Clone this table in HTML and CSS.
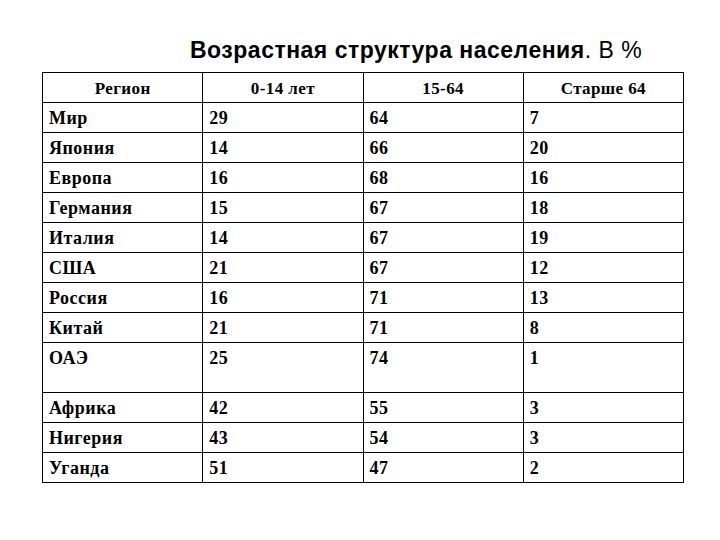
FILE: index.html
```html
<!DOCTYPE html>
<html lang="ru">
<head>
<meta charset="utf-8">
<link rel="stylesheet" href="styles.css">
</head>
<body>
<div class="page">
  <h1 class="title"><span class="title-main">Возрастная структура населения</span>. В %</h1>
  <table class="data">
    <colgroup><col class="c"><col class="c"><col class="c"><col class="c"></colgroup>
    <thead>
      <tr class="head"><th>Регион</th><th>0-14 лет</th><th>15-64</th><th>Старше 64</th></tr>
    </thead>
    <tbody>
      <tr><td>Мир</td><td>29</td><td>64</td><td>7</td></tr>
      <tr><td>Япония</td><td>14</td><td>66</td><td>20</td></tr>
      <tr><td>Европа</td><td>16</td><td>68</td><td>16</td></tr>
      <tr><td>Германия</td><td>15</td><td>67</td><td>18</td></tr>
      <tr><td>Италия</td><td>14</td><td>67</td><td>19</td></tr>
      <tr><td>США</td><td>21</td><td>67</td><td>12</td></tr>
      <tr><td>Россия</td><td>16</td><td>71</td><td>13</td></tr>
      <tr><td>Китай</td><td>21</td><td>71</td><td>8</td></tr>
      <tr class="tall"><td>ОАЭ</td><td>25</td><td>74</td><td>1</td></tr>
      <tr><td>Африка</td><td>42</td><td>55</td><td>3</td></tr>
      <tr><td>Нигерия</td><td>43</td><td>54</td><td>3</td></tr>
      <tr><td>Уганда</td><td>51</td><td>47</td><td>2</td></tr>
    </tbody>
  </table>
</div>
</body>
</html>
```

FILE: styles.css
```css
html, body {
  margin: 0;
  padding: 0;
  background: #ffffff;
  color: #000000;
}

.page {
  width: 720px;
  height: 540px;
  padding: 37px 0 0 42px;
  box-sizing: border-box;
}

.title {
  margin: 0 0 9px 148px;
  font-family: "Liberation Sans", Arial, sans-serif;
  font-size: 23px;
  font-weight: normal;
  letter-spacing: 0.5px;
  line-height: 26px;
  white-space: nowrap;
}

.title-main {
  font-weight: bold;
}

.data {
  border-collapse: collapse;
  table-layout: fixed;
  width: 642px;
  font-family: "Liberation Serif", "Times New Roman", serif;
  font-size: 18px;
  font-weight: bold;
  letter-spacing: 0.5px;
}

.data .c {
  width: 25%;
}

.data th,
.data td {
  border: 1px solid #000;
  padding: 6px 6px 0 6px;
  vertical-align: top;
  line-height: 18px;
  text-align: left;
}

.data th {
  text-align: center;
  font-size: 17px;
  letter-spacing: 0.4px;
  padding-top: 7px;
}

.data tr {
  height: 30px;
}

.data tr.tall {
  height: 50px;
}
```
